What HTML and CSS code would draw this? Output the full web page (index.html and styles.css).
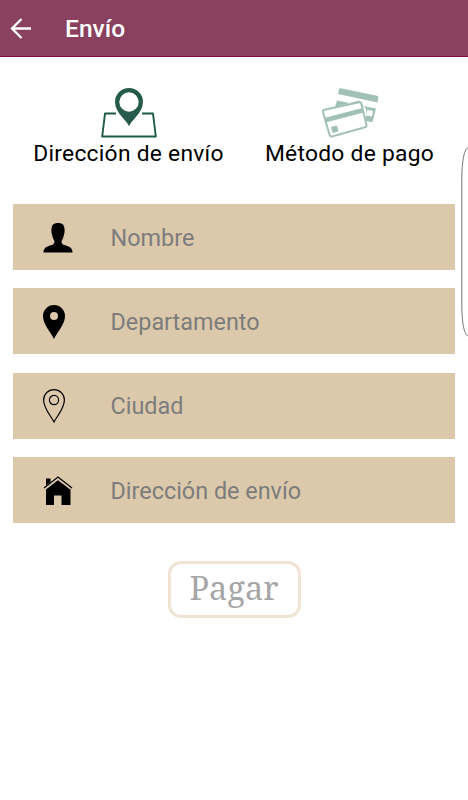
FILE: index.html
```html
<!DOCTYPE html>
<html lang="es">

<head>
    <meta charset="UTF-8">
    <meta name="viewport" content="width=device-width, initial-scale=1.0">
    <title>Envío</title>
    <link rel="stylesheet" href="styles.css">
</head>

<body>

    <header class="toolbar">
        <svg class="back" width="22" height="22" viewBox="0 0 22 22">
            <path d="M21 11.500H2M11.500 2L2 11.500l9.500 9.500" fill="none" stroke="#fff" stroke-width="2.300" />
        </svg>
        <h1>Envío</h1>
    </header>

    <nav class="steps">
        <div class="step">
            <svg width="58" height="52" viewBox="0 0 58 52">
                <path d="M16 26.5H5L2.2 49.5h53.6L53 26.5H42" fill="none" stroke="#1b5a48" stroke-width="1.9" stroke-linejoin="round" />
                <path fill-rule="evenodd" fill="#265b4c" d="M29 39.3C27 33.5 15 26 15 15a14 14 0 0 1 28 0C43 26 31 33.5 29 39.3zM29 5.3a9.7 9.7 0 1 0 0 19.4a9.7 9.7 0 0 0 0-19.4z" />
            </svg>
            <span>Dirección de envío</span>
        </div>
        <div class="step">
            <svg width="58" height="52" viewBox="0 0 58 52">
                <g fill="#a2c1b6">
                    <path d="M18 2.200Q18.500 1 20 1.300L56 8.700Q57.500 9 57.300 10.500L56.500 15.500L17 7z" />
                    <path fill-rule="evenodd" d="M16 13.500L55 21.500L52 33.500Q51.500 35.200 49.500 35L45 34V22L38 13.500L14 20zM46 23L45 28.500L51 29.500L52 24z" />
                </g>
                <path d="M3.500 22.800L38 15.200Q39.800 14.800 40.300 16.500L45.500 38Q45.800 39.800 44 40.300L11 49.500Q9.200 50 8.600 48L2 25Q1.600 23.300 3.500 22.800z" fill="#fff" stroke="#a2c1b6" stroke-width="2" />
                <path d="M3 31L41.500 21L42.800 25.500L4.500 35.500z" fill="#a2c1b6" />
                <path d="M10.500 40.300L15.500 39L17 44L12 45.500z" fill="#a2c1b6" stroke="#a2c1b6" />
            </svg>
            <span>Método de pago</span>
        </div>
    </nav>

    <form class="form">
        <label class="field">
            <svg width="30" height="30" viewBox="0 0 30 30">
                <path d="M15 0C19.500 0 21.300 2 21.500 6C22 9 21 12 20.500 13.500C20 15.500 19 17 18.500 18.500C18.500 20.500 19.500 21.500 22 22.300C27 24 29.500 25 29.500 29.500H.5C.5 25 3 24 8 22.300C10.500 21.500 11.500 20.500 11.500 18.500C11 17 10 15.500 9.500 13.500C9 12 8 9 8.500 6C8.700 2 10.500 0 15 0z" />
            </svg>
            <input type="text" placeholder="Nombre">
        </label>
        <label class="field">
            <svg class="pin" width="22" height="34" viewBox="0 0 22 34">
                <path fill-rule="evenodd" d="M11 34C8 27.500 0 19.500 0 11a11 11 0 0 1 22 0C22 19.500 14 27.500 11 34zM11 7a4 4 0 1 0 0 8a4 4 0 0 0 0-8z" />
            </svg>
            <input type="text" placeholder="Departamento">
        </label>
        <label class="field">
            <svg class="pin" width="22" height="34" viewBox="0 0 22 34" fill="none" stroke="#000" stroke-width="1.200">
                <path d="M11 33C8 27 .6 19.500 .6 11a10.400 10.400 0 0 1 20.800 0C21.400 19.500 14 27 11 33z" />
                <circle cx="11" cy="11" r="4.600" />
            </svg>
            <input type="text" placeholder="Ciudad">
        </label>
        <label class="field">
            <svg width="30" height="30" viewBox="0 0 30 30">
                <path d="M3 2.500H7.500V8L3 12z" />
                <path d="M3 12.500L15 3.500L27.500 12.500V29H18.500V19.500H11V29H3z" />
                <path d="M2 12.300L15 2.200L28 12.300" fill="none" stroke="#dcc9ac" stroke-width="3" />
                <path d="M1 12L15 1L29 12" fill="none" stroke="#000" stroke-width="1.300" />
            </svg>
            <input type="text" placeholder="Dirección de envío">
        </label>
        <button type="button" class="pay">Pagar</button>
    </form>

    <!-- Drawer handle on the right edge -->
    <div class="edge">
        <svg width="7" height="190" viewBox="0 0 7 190">
            <path d="M7 .5C3 3 .8 14 .8 34V156C.8 176 3 187 7 189" fill="none" stroke="#666" stroke-width=".9" />
        </svg>
    </div>

</body>

</html>
```
FILE: styles.css
```css
body {
    margin: 0;
    height: 800px;
    background: #fff;
    color: #000;
    font-family: Roboto, sans-serif;
    overflow: hidden;
}

/* Top bar */
.toolbar {
    display: flex;
    align-items: center;
    box-sizing: border-box;
    height: 57px;
    padding-left: 10px;
    background: #8a415f;
    border-bottom: 1px solid #7a0a40;
}

.toolbar h1 {
    margin: 0 0 0 33px;
    font-size: 24.6px;
    font-weight: 500;
    color: #fff;
}

/* Steps */
.steps {
    display: flex;
    padding: 30px 8px 0 18px;
}

.step {
    display: flex;
    flex-direction: column;
    align-items: center;
    width: 221px;
    font-size: 22.8px;
    line-height: 29px;
    letter-spacing: 0.27px;
    white-space: nowrap;
}

/* Form fields */
.form {
    display: flex;
    flex-direction: column;
    gap: 18.4px;
    padding: 36px 13px 0;
}

.field {
    display: flex;
    align-items: center;
    box-sizing: border-box;
    height: 66px;
    padding: 1px 0 0 30px;
    background: #dcc9ac;
}

.field svg {
    width: 30px;
}

.field .pin {
    width: 22px;
    margin-right: 8px;
}

.field input {
    flex: 1;
    min-width: 0;
    margin-left: 37.5px;
    padding: 0;
    border: none;
    outline: none;
    background: none;
    font-family: inherit;
    font-size: 23.4px;
}

.field input::placeholder {
    color: #7c7c7c;
}

.pay {
    align-self: center;
    width: 133px;
    height: 57px;
    margin-top: 19px;
    padding: 0 0 3px;
    border: 3px solid #efe3d4;
    border-radius: 13px;
    background: #fff;
    color: #a6a6a6;
    font-family: "Noto Serif", "DejaVu Serif", serif;
    font-size: 32.5px;
}

.edge {
    position: absolute;
    top: 147px;
    right: 0;
    width: 7px;
}

.edge svg {
    display: block;
}
```
